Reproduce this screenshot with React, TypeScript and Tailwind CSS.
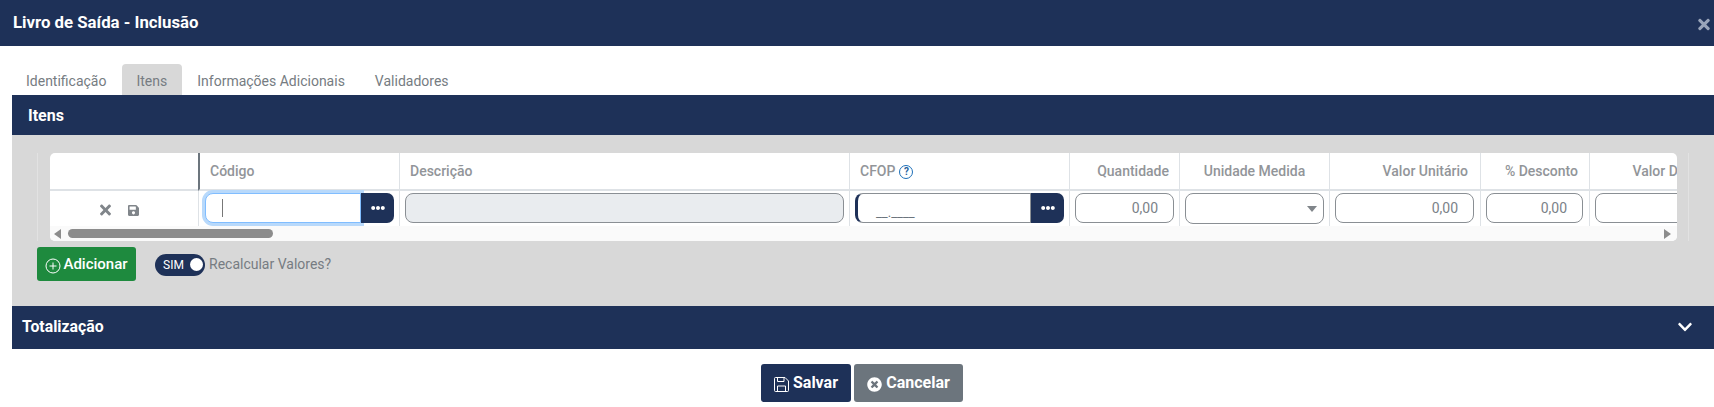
import { FaTimes, FaSave, FaEllipsisH, FaChevronDown, FaTimesCircle } from "react-icons/fa";

const navy = "bg-[#1e3158]";

function EllipsisBtn() {
  return (
    <div className={`flex h-[30px] w-[33px] shrink-0 items-center justify-center rounded-r-[7px] ${navy} text-white`}>
      <FaEllipsisH className="h-[14px] w-[14px]" />
    </div>
  );
}

function NumInput({ value }: { value?: string }) {
  return (
    <div className="flex h-[30px] w-full items-center justify-end rounded-[8px] border border-[#8a8f94] bg-white pr-[15px] text-[14px] text-[#7b8288]">
      {value}
    </div>
  );
}

function HeadCell({ children, pr, dark }: { children: React.ReactNode; pr?: string; dark?: boolean }) {
  return (
    <div
      className={`flex h-[38px] items-center border-b-2 border-[#dee2e6] pt-[1px] text-[14px] font-medium text-[#929599] ${
        pr ? `justify-end ${pr}` : "pl-[10px]"
      } ${dark ? "border-l-2 border-l-[#6c757d]" : "border-l border-l-[#dee2e6]"}`}
    >
      {children}
    </div>
  );
}

function BodyCell({ children, num }: { children?: React.ReactNode; num?: boolean }) {
  return (
    <div className={`flex h-[35px] items-start border-l border-[#dee2e6] pl-[5px] pt-[2px] ${num ? "pr-[6px]" : "pr-[5px]"}`}>
      {children}
    </div>
  );
}

export default function App() {
  return (
    <div className="h-[407px] w-full overflow-hidden bg-white font-['Roboto',sans-serif]">
      <div className={`flex h-[46px] items-center justify-between pl-[13px] pr-[4px] ${navy}`}>
        <span className="text-[16.8px] font-bold text-white">Livro de Saída - Inclusão</span>
        <FaTimes className="mt-[2px] h-[17px] w-[12px] text-[#9aa5ba]" />
      </div>

      <div className="ml-[12px] mt-[18px] flex h-[31px] text-[14px] text-[#767c82]">
        <div className="flex items-center pl-[14px] pr-[16px] pt-[4px]">Identificação</div>
        <div className="flex items-center rounded-t-[4px] bg-[#d8d8d8] pl-[14px] pr-[15px] pt-[4px]">Itens</div>
        <div className="flex items-center pl-[15px] pr-[16px] pt-[4px]">Informações Adicionais</div>
        <div className="flex items-center px-[14px] pt-[4px]">Validadores</div>
      </div>

      <div className="ml-[12px]">
        <div className={`flex h-[40px] items-center pl-[16px] pt-[1px] text-[16px] font-bold text-white ${navy}`}>Itens</div>

        <div className="h-[171px] bg-[#d8d8d8] pl-[25px] pt-[18px]">
          <div className="h-[88px] w-[1652px] border-x border-[#e2e2e2] px-[12px]">
            <div className="w-[1627px] overflow-hidden rounded-[5px] bg-white">
              <div className="grid w-[1627px] grid-cols-[148px_201px_450px_220px_110px_150px_151px_109px_150px] whitespace-nowrap">
                <div className="h-[38px] border-b-2 border-[#dee2e6]" />
                <HeadCell dark>Código</HeadCell>
                <HeadCell>Descrição</HeadCell>
                <HeadCell>
                  CFOP
                  <span className="ml-[4px] flex h-[14px] w-[14px] items-center justify-center rounded-full border border-[#1d6fb8] text-[10px] font-bold leading-none text-[#1d5f9e]">
                    ?
                  </span>
                </HeadCell>
                <HeadCell pr="pr-[10px]">Quantidade</HeadCell>
                <div className="flex h-[38px] items-center justify-center border-b-2 border-l border-[#dee2e6] pt-[1px] text-[14px] font-medium text-[#929599]">
                  Unidade Medida
                </div>
                <HeadCell pr="pr-[12px]">Valor Unitário</HeadCell>
                <HeadCell pr="pr-[11px]">% Desconto</HeadCell>
                <HeadCell pr="pr-[11px]">Valor Desconto</HeadCell>

                <div className="flex h-[35px] items-center justify-start gap-[17px] pl-[50px] pt-[3px] text-[#80858a]">
                  <FaTimes className="h-[16px] w-[11px]" />
                  <FaSave className="h-[13px] w-[11px]" />
                </div>
                <BodyCell>
                  <div className="ml-[1px] flex h-[30px] w-[156px] shrink-0 items-center rounded-l-[8px] border border-[#80bdff] bg-white pl-[16px] shadow-[0_0_0_3px_#b8d9fb]">
                    <div className="h-[18px] w-px bg-[#777]" />
                  </div>
                  <EllipsisBtn />
                </BodyCell>
                <BodyCell>
                  <div className="h-[30px] w-full rounded-[8px] border border-[#8a8f94] bg-[#e9ecef]" />
                </BodyCell>
                <BodyCell>
                  <div className="flex h-[30px] flex-1 items-end rounded-l-[8px] border border-l-[3px] border-[#8a8f94] border-l-[#1e3158] bg-white pb-[3px] pl-[18px] text-[13px] leading-[13px] text-[#6c757d]">
                    __.____
                  </div>
                  <EllipsisBtn />
                </BodyCell>
                <BodyCell><NumInput value="0,00" /></BodyCell>
                <BodyCell>
                  <div className="flex h-[31px] w-full items-center justify-end rounded-[8px] border border-[#8a8f94] bg-white pr-[4px]">
                    <svg width="14" height="7" viewBox="0 0 14 7" className="mt-[1px]">
                      <path d="M2 0h10L7 6z" fill="#80858a" />
                    </svg>
                  </div>
                </BodyCell>
                <BodyCell num><NumInput value="0,00" /></BodyCell>
                <BodyCell num><NumInput value="0,00" /></BodyCell>
                <BodyCell num><NumInput /></BodyCell>
              </div>

              <div className="flex h-[15px] items-center bg-[#fafafa] pl-[4px] pr-[6px]">
                <svg width="8" height="10" viewBox="0 0 8 10" className="shrink-0"><path d="M7 0v10L0 5z" fill="#8c8c8c" /></svg>
                <div className="ml-[6px] h-[9px] w-[205px] rounded-full bg-[#8c8c8c]" />
                <svg width="8" height="10" viewBox="0 0 8 10" className="ml-auto shrink-0"><path d="M1 0v10l7-5z" fill="#8c8c8c" /></svg>
              </div>
            </div>
          </div>

          <div className="mt-[6px] flex items-center">
            <button className="flex h-[34px] w-[99px] items-center justify-center gap-[2px] rounded-[3px] bg-[#1e8a3e] text-[15px] font-medium text-white">
              <svg width="16" height="16" viewBox="0 0 16 16" fill="none" stroke="currentColor" strokeWidth="1" className="mt-[3px]">
                <circle cx="8" cy="8" r="7" />
                <path d="M8 4.5v7M4.5 8h7" />
              </svg>
              Adicionar
            </button>
            <div className={`ml-[19px] mt-[1px] flex h-[22px] w-[50px] items-center justify-between rounded-full pl-[8px] pr-[2px] text-[12px] text-white ${navy}`}>
              SIM
              <div className="h-[13px] w-[13px] rounded-full bg-white" />
            </div>
            <span className="ml-[4px] text-[14px] text-[#767c82]">Recalcular Valores?</span>
          </div>
        </div>

        <div className={`flex h-[43px] items-center justify-between pb-[2px] pl-[10px] pr-[22px] text-[15.8px] font-bold text-white ${navy}`}>
          Totalização
          <FaChevronDown className="h-[16px] w-[14px]" />
        </div>
      </div>

      <div className="mt-[15px] flex justify-center gap-[3px] pl-[10px]">
        <button className={`flex h-[38px] w-[90px] items-center justify-center gap-[4px] rounded-[3px] text-[16px] font-bold text-white ${navy}`}>
          <svg width="15" height="15" viewBox="0 0 15 15" fill="none" stroke="currentColor" strokeWidth="1" className="mt-[2px]">
            <path d="M1.5.5h9.5l3.5 3.5v9.5a1 1 0 0 1-1 1h-12a1 1 0 0 1-1-1v-12a1 1 0 0 1 1-1z" />
            <path d="M3.5.5v4h6.5v-4M3.5 14.5v-5.5h8v5.5" />
          </svg>
          Salvar
        </button>
        <button className="flex h-[38px] w-[109px] items-center justify-center gap-[4px] rounded-[3px] bg-[#6c757d] text-[16px] font-bold text-white">
          <FaTimesCircle className="mt-[3px] h-[15px] w-[15px]" />
          Cancelar
        </button>
      </div>
    </div>
  );
}
